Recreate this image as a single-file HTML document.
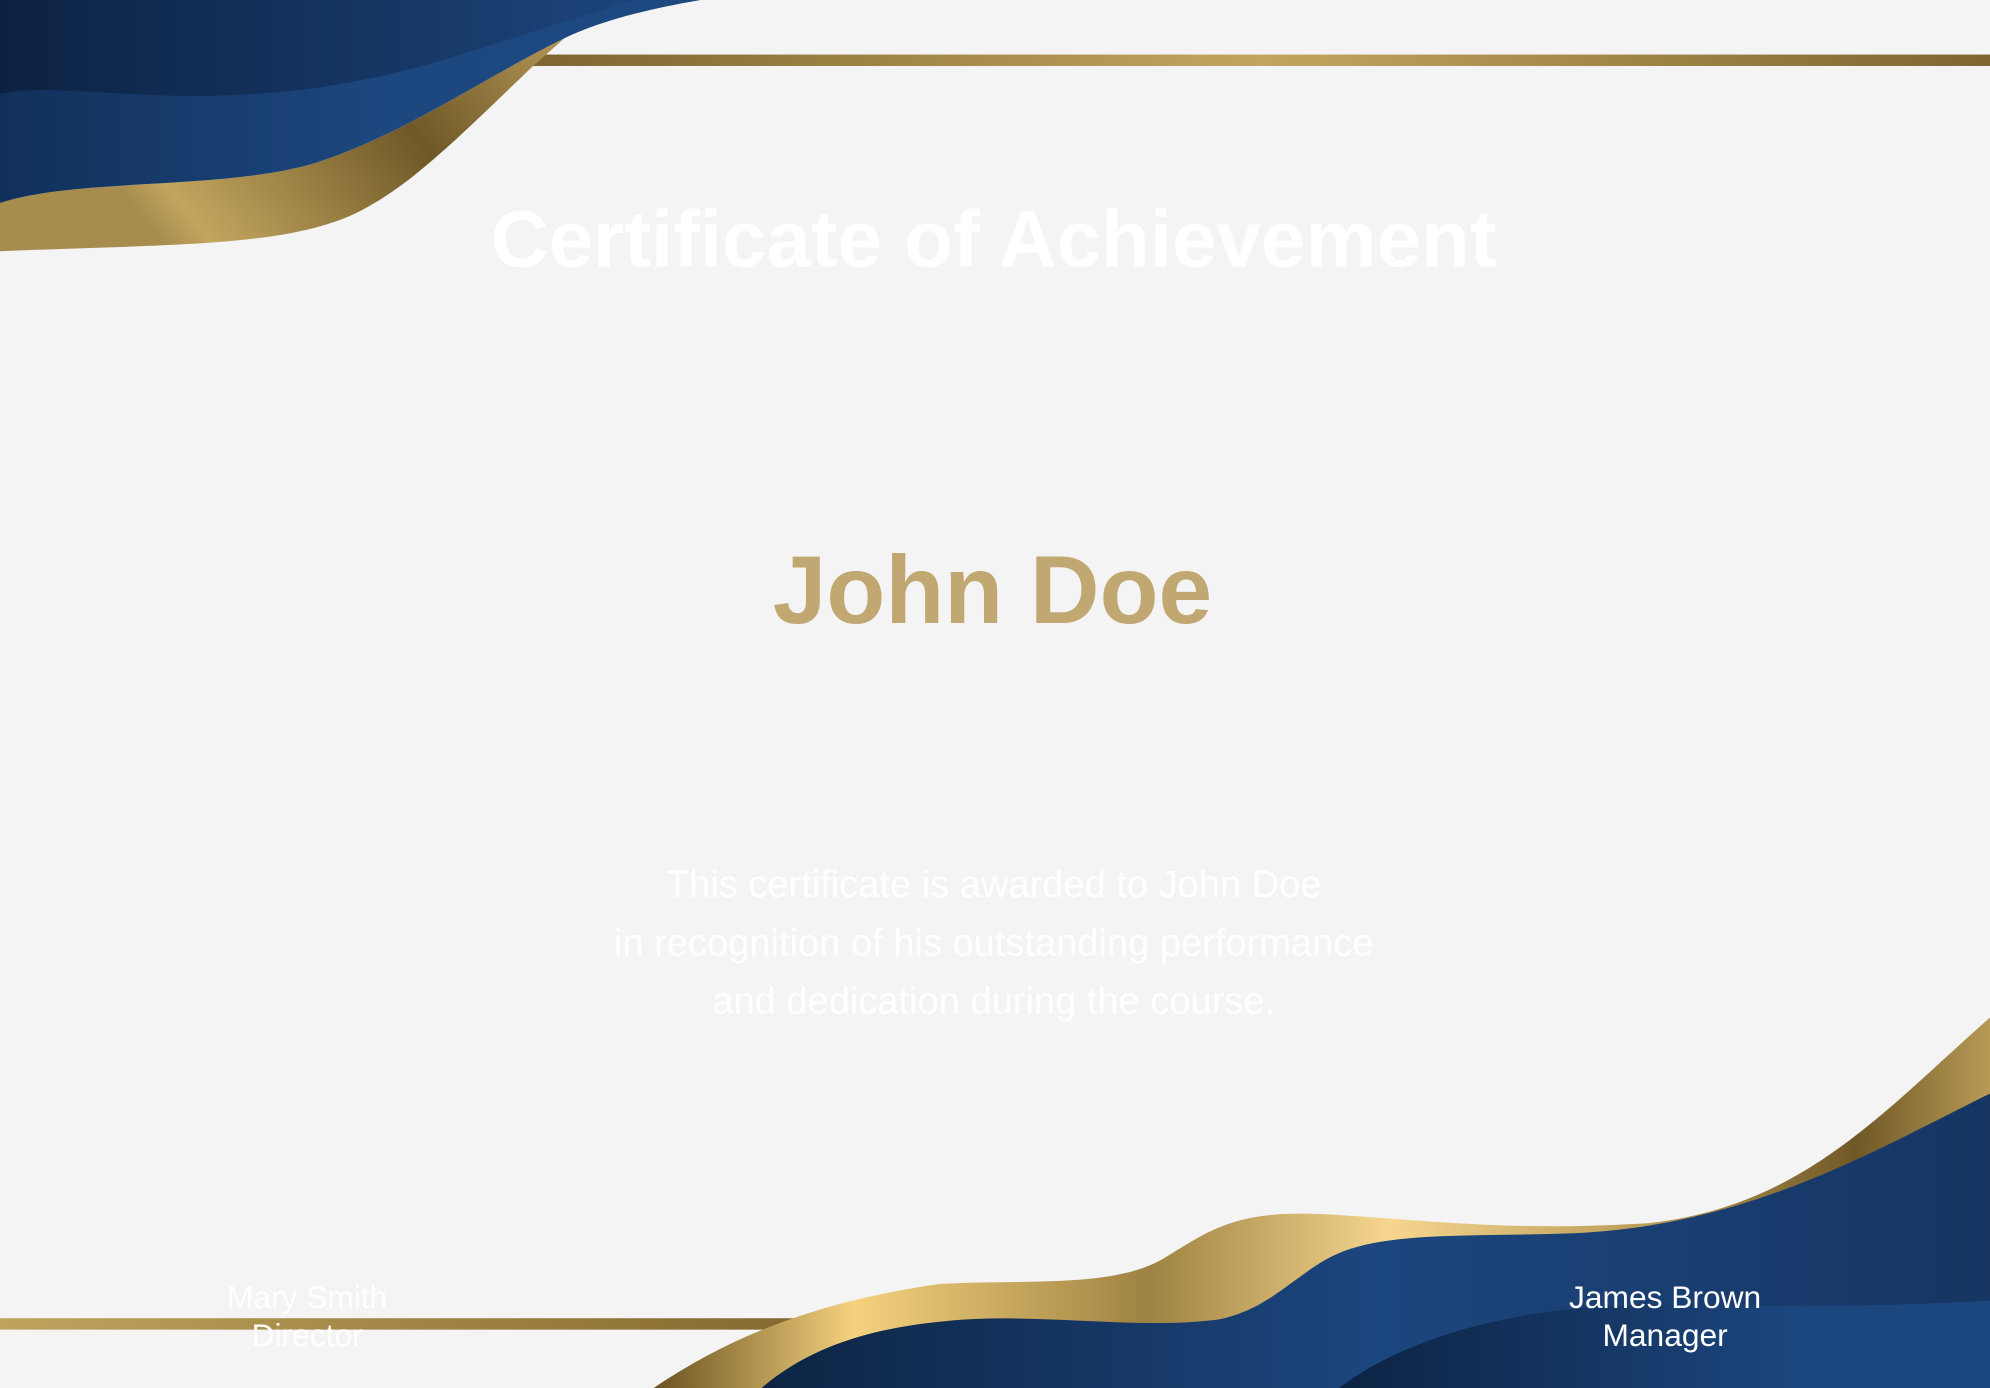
<!DOCTYPE html>
<html><head><meta charset="utf-8"><style>
html,body{margin:0;padding:0;background:#f4f4f4;}
svg{display:block;width:1990px;height:1388px;}
text{font-family:"Liberation Sans",Arial,sans-serif;}
</style></head><body>
<svg viewBox="0 0 1568 1094" preserveAspectRatio="none" xmlns="http://www.w3.org/2000/svg">
<defs>
<linearGradient id="line" x1="0" x2="1"><stop offset="0" stop-color="#7e6530"/><stop offset="0.5" stop-color="#c4a55f"/><stop offset="1" stop-color="#7e6530"/></linearGradient>
<linearGradient id="line2" x1="0" x2="1"><stop offset="0" stop-color="#c0a35d"/><stop offset="1" stop-color="#86692f"/></linearGradient>
<linearGradient id="bl" x1="0" x2="1"><stop offset="0" stop-color="#11305a"/><stop offset="0.55" stop-color="#1d477f"/><stop offset="1" stop-color="#1e4880"/></linearGradient>
<linearGradient id="bltop" x1="0" x2="1"><stop offset="0" stop-color="#0c2242"/><stop offset="1" stop-color="#1c447b"/></linearGradient>
<linearGradient id="bl2" x1="0" x2="1"><stop offset="0" stop-color="#0c2343"/><stop offset="0.7" stop-color="#1c467e"/></linearGradient>
<linearGradient id="g1" x1="0" y1="0" x2="1" y2="-0.3"><stop offset="0" stop-color="#a88c4e"/><stop offset="0.08" stop-color="#c2a55e"/><stop offset="0.55" stop-color="#6f5827"/><stop offset="1" stop-color="#c4a55f"/></linearGradient>
<linearGradient id="g2" x1="515" y1="0" x2="1568" y2="0" gradientUnits="userSpaceOnUse"><stop offset="0" stop-color="#6a5220"/><stop offset="0.15" stop-color="#f5d27f"/><stop offset="0.37" stop-color="#9e8241"/><stop offset="0.55" stop-color="#f6d68f"/><stop offset="0.75" stop-color="#b89a55"/><stop offset="0.9" stop-color="#705826"/><stop offset="1" stop-color="#b89a55"/></linearGradient>
<linearGradient id="bl3" x1="0" x2="1"><stop offset="0" stop-color="#0d2444"/><stop offset="0.5" stop-color="#1c467e"/><stop offset="1" stop-color="#163563"/></linearGradient>
</defs>
<rect width="1568" height="1094" fill="#f4f4f4"/>
<rect x="420" y="43" width="1148" height="9" fill="url(#line)"/>
<rect x="0" y="1039" width="630" height="9" fill="url(#line2)"/>
<path d="M0 160 C60 140 180 150 250 128 C320 105 380 62 445 30 L420 52 C370 100 330 140 295 160 C240 195 150 192 0 198 Z" fill="url(#g1)"/>
<path d="M0 0 L552 0 C505 8 470 18 445 30 C380 62 320 105 250 128 C180 150 60 140 0 160 Z" fill="url(#bl)"/>
<path d="M0 0 L500 0 C440 18 400 32 340 50 C270 70 200 78 120 75 C60 72 25 68 0 74 Z" fill="url(#bltop)"/>
<path d="M515 1094 C580 1050 650 1025 740 1012 C810 1008 880 1016 920 990 C960 965 980 952 1060 958 C1150 964 1200 970 1300 964 C1420 950 1480 880 1568 802 L1568 1094 Z" fill="url(#g2)"/>
<path d="M600 1094 C640 1060 690 1045 760 1040 C830 1036 900 1048 960 1040 C1000 1032 1020 1005 1050 990 C1090 970 1160 975 1240 972 C1380 966 1480 905 1568 862 L1568 1094 Z" fill="url(#bl3)"/>
<path d="M1055 1094 C1100 1060 1170 1036 1260 1030 C1350 1028 1450 1032 1568 1025 L1568 1094 Z" fill="url(#bl2)"/>
<text x="783" y="210" text-anchor="middle" font-size="63" font-weight="bold" fill="#ffffff">Certificate of Achievement</text>
<text x="782" y="491" text-anchor="middle" font-size="76" font-weight="bold" fill="#c1a872">John Doe</text>
<g font-size="30" fill="#ffffff" text-anchor="middle">
<text x="783" y="707">This certificate is awarded to John Doe</text>
<text x="783" y="753">in recognition of his outstanding performance</text>
<text x="783" y="799">and dedication during the course.</text>
</g>
<g font-size="25" fill="#ffffff" text-anchor="middle">
<text x="242" y="1031">Mary Smith</text>
<text x="242" y="1061">Director</text>
<text x="1312" y="1031">James Brown</text>
<text x="1312" y="1061">Manager</text>
</g>
</svg>
</body></html>
